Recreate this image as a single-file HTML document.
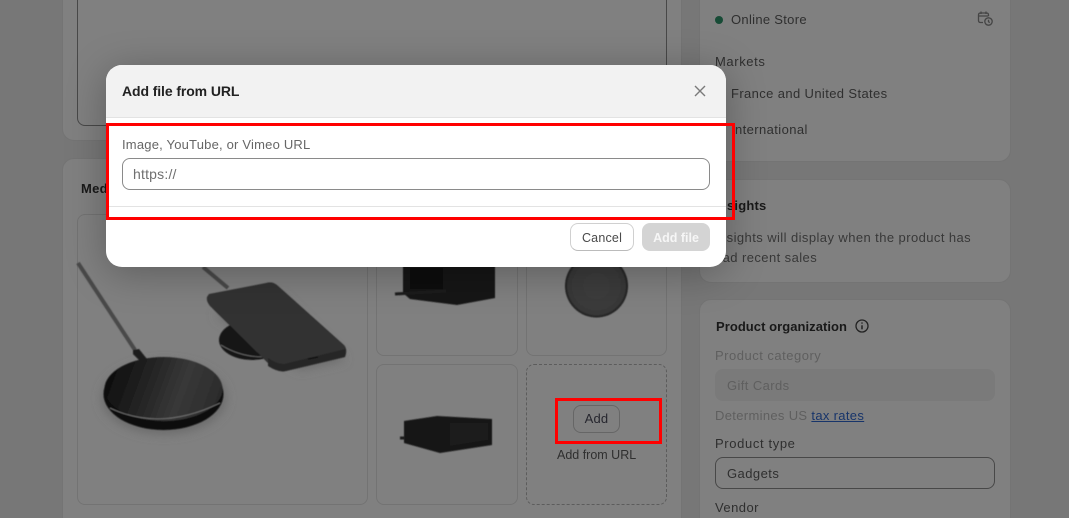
<!DOCTYPE html>
<html lang="en">
<head>
<meta charset="utf-8">
<title>Add file from URL</title>
<style>
html,body{margin:0;padding:0;width:1069px;height:518px;overflow:hidden;background:#777;font-family:"Liberation Sans",sans-serif}
*{box-sizing:border-box}
#w{position:relative;width:1069px;height:518px;overflow:hidden;background:#777}
.a{position:absolute}
.t{position:absolute;white-space:nowrap;font-size:13px;line-height:18px;letter-spacing:.3px;color:#2f2f2f}
.b{font-weight:bold;color:#191919}
.card{position:absolute;background:#808080;border:1px solid #747474;border-radius:12px}
.tile{position:absolute;border:1px solid #737373;border-radius:8px}
</style>
</head>
<body>
<div id="w">
<div class="card" style="left:62px;top:-40px;width:620px;height:181px"></div>
<div class="a" style="left:77px;top:-40px;width:590px;height:166px;border:1px solid #484848;border-radius:8px"></div>

<div class="card" style="left:62px;top:158px;width:620px;height:381px"></div>
<div class="t b" style="left:81px;top:180px">Media</div>
<div class="tile" style="left:77px;top:214px;width:291px;height:291px"></div>
<div class="tile" style="left:376px;top:214px;width:142px;height:142px"></div>
<div class="tile" style="left:526px;top:214px;width:141px;height:142px"></div>
<div class="tile" style="left:376px;top:364px;width:142px;height:141px"></div>
<div class="tile" style="left:526px;top:364px;width:141px;height:141px;border:1px dashed #5c5c5c"></div>

<svg class="a" style="left:0;top:0" width="1069" height="518" viewBox="0 0 1069 518">
  <defs>
    <linearGradient id="disc" x1="0" x2="1" y1="0.4" y2="0.6"><stop offset="0" stop-color="#0d0d0d"/><stop offset=".65" stop-color="#383838"/><stop offset="1" stop-color="#2b2b2b"/></linearGradient>
    <radialGradient id="circ"><stop offset="0" stop-color="#3e3e3e"/><stop offset=".9" stop-color="#393939"/><stop offset="1" stop-color="#1c1c1c"/></radialGradient>
    <filter id="soft" x="-10%" y="-10%" width="120%" height="120%"><feGaussianBlur stdDeviation=".5"/></filter>
    <filter id="sh" x="-30%" y="-30%" width="160%" height="160%"><feGaussianBlur stdDeviation="5"/></filter>
  </defs>
  <ellipse cx="164" cy="398" rx="62" ry="36" fill="#6a6a6a" filter="url(#sh)"/>
  <path d="M215 315L300 370L345 360L280 295Z" fill="#6c6c6c" filter="url(#sh)"/>
  <g filter="url(#soft)">
  <path d="M78 263L135 350" stroke="#484848" stroke-width="4" fill="none"/>
  <path d="M133 350l6-1 8 10-6 3-8-8z" fill="#1d1d1d"/>
  <ellipse cx="163.500" cy="394" rx="60" ry="36" fill="#0c0c0c"/>
  <ellipse cx="163.500" cy="389" rx="59" ry="32" fill="url(#disc)"/>
  <path d="M110 408Q160 432 220 403" stroke="#777" stroke-width=".8" fill="none"/>
  <path d="M203 267L228 288" stroke="#484848" stroke-width="4" fill="none"/>
  <ellipse cx="252" cy="340" rx="33" ry="20" fill="#141414"/>
  <path d="M221 345Q245 360 275 356" stroke="#6a6a6a" stroke-width=".8" fill="none"/>
  <path d="M209 294L266 283Q272 281 277 285L344 345Q347 348 346 354L345 357L286 371Q279 372 273 368L210 306Q206 301 207 297Z" fill="#303030"/>
  <path d="M268 366Q279 373 286 371L345 357L346 349L285 364Q278 365 268 358Z" fill="#262626"/>
  <path d="M308 359l10-2" stroke="#0b0b0b" stroke-width="1.200"/>

  <path d="M403 262H495V298L457 305L410 299L403 293Z" fill="#141414"/>
  <path d="M410 268H443V289H410Z" fill="#070707"/>
  <path d="M395 294L446 291" stroke="#1d1d1d" stroke-width="3"/>
  <circle cx="596.500" cy="286" r="31.500" fill="url(#circ)"/>
  <path d="M404 421L437 416L492 419V445L440 453L404 443Z" fill="#131313"/>
  <path d="M450 423H488V440L450 446Z" fill="#1a1a1a"/>
  <path d="M400 438h5" stroke="#1a1a1a" stroke-width="3"/>
  </g>
</svg>

<div class="a" style="left:573px;top:405px;width:47px;height:28px;border:1px solid #666;border-radius:8px"></div>
<div class="t" style="left:573px;width:47px;text-align:center;top:410px;color:#26262e;letter-spacing:.2px">Add</div>
<div class="t" style="left:557px;top:446px;font-size:12.500px;letter-spacing:0">Add from URL</div>

<div class="card" style="left:699px;top:-40px;width:312px;height:202px"></div>
<div class="a" style="left:715px;top:16px;width:8px;height:8px;border-radius:50%;background:#174b36"></div>
<div class="t" style="left:731px;top:11px">Online Store</div>
<svg class="a" style="left:976px;top:10px" width="18" height="18" viewBox="0 0 18 18" fill="none" stroke="#454545" stroke-width="1.300">
  <path d="M7 12.500H4.500Q2.500 12.500 2.500 10.500V5Q2.500 3 4.500 3H10.500Q12.500 3 12.500 5V6M2.500 6H12.500M5 1.500V4M10 1.500V4"/>
  <circle cx="12.500" cy="11.500" r="3.700"/><path d="M12.500 9.800V11.700L13.700 12.600"/>
</svg>
<div class="t" style="left:715px;top:53px;letter-spacing:.6px">Markets</div>
<div class="t" style="left:731px;top:85px;letter-spacing:.38px">France and United States</div>
<div class="t" style="left:731px;top:121px;letter-spacing:.4px">International</div>

<div class="card" style="left:699px;top:179px;width:312px;height:104px"></div>
<div class="t b" style="left:715px;top:197px;letter-spacing:.2px">Insights</div>
<div class="t" style="left:715px;top:229px;color:#383838;letter-spacing:.42px">Insights will display when the product has</div>
<div class="t" style="left:715px;top:249px;color:#383838;letter-spacing:.42px">had recent sales</div>

<div class="card" style="left:699px;top:299px;width:312px;height:240px"></div>
<div class="t b" style="left:716px;top:318px;letter-spacing:.05px">Product organization</div>
<svg class="a" style="left:855px;top:319px" width="14" height="14" viewBox="0 0 14 14" fill="none" stroke="#222" stroke-width="1.300">
  <circle cx="7" cy="7" r="6"/><path d="M7 6.300V10.300" stroke-width="1.500"/><circle cx="7" cy="4" r=".8" fill="#222" stroke="none"/>
</svg>
<div class="t" style="left:715px;top:347px;color:#5f5f5f;letter-spacing:.5px">Product category</div>
<div class="a" style="left:715px;top:369px;width:280px;height:32px;border-radius:8px;background:#7a7a7a"></div>
<div class="t" style="left:727px;top:377px;color:#5f5f5f;letter-spacing:.4px">Gift Cards</div>
<div class="t" style="left:715px;top:407px;color:#5f5f5f;letter-spacing:.33px">Determines US <span style="color:#17346a;text-decoration:underline">tax rates</span></div>
<div class="t" style="left:715px;top:435px;letter-spacing:.63px">Product type</div>
<div class="a" style="left:715px;top:457px;width:280px;height:32px;border:1px solid #484848;border-radius:8px"></div>
<div class="t" style="left:727px;top:465px;letter-spacing:.45px">Gadgets</div>
<div class="t" style="left:715px;top:499px;letter-spacing:.45px">Vendor</div>

<div class="a" style="left:106px;top:65px;width:620px;height:202px;background:#fff;border-radius:16px;overflow:hidden;box-shadow:0 6px 40px rgba(0,0,0,.28)">
  <div class="a" style="left:0;top:0;width:620px;height:53px;background:#f2f2f2;border-bottom:1px solid #e3e3e3"></div>
  <div class="t" style="left:16px;top:17px;font-size:14px;font-weight:bold;color:#222;letter-spacing:-.1px">Add file from URL</div>
  <svg class="a" style="left:587px;top:19px" width="14" height="14" viewBox="0 0 14 14" fill="none" stroke="#7a7a7a" stroke-width="1.400"><path d="M2 2L12 12M12 2L2 12"/></svg>
  <div class="t" style="left:16px;top:71px;color:#666;letter-spacing:.2px">Image, YouTube, or Vimeo URL</div>
  <div class="a" style="left:16px;top:93px;width:588px;height:32px;border:1px solid #8a8a8a;border-radius:8px"></div>
  <div class="t" style="left:27px;top:100px;color:#6f6f6f;font-size:14px;letter-spacing:.2px">https://</div>
  <div class="a" style="left:0;top:141px;width:620px;height:1px;background:#e3e3e3"></div>
  <div class="a" style="left:464px;top:158px;width:64px;height:28px;border:1px solid #d0d0d0;border-bottom-color:#bbb;border-radius:8px;background:#fff"></div>
  <div class="t" style="left:464px;width:64px;text-align:center;top:164px;font-size:12.500px;color:#4a4a4a;letter-spacing:.2px">Cancel</div>
  <div class="a" style="left:536px;top:158px;width:68px;height:28px;border-radius:8px;background:#d4d4d4"></div>
  <div class="t" style="left:536px;width:68px;text-align:center;top:164px;font-size:12.500px;font-weight:bold;color:#f6f6f6;letter-spacing:0">Add file</div>
</div>

<div class="a" style="left:106px;top:123px;width:629px;height:97px;border:3px solid #f00"></div>
<div class="a" style="left:555px;top:398px;width:107px;height:46px;border:3px solid #f00"></div>
</div>
</body>
</html>
